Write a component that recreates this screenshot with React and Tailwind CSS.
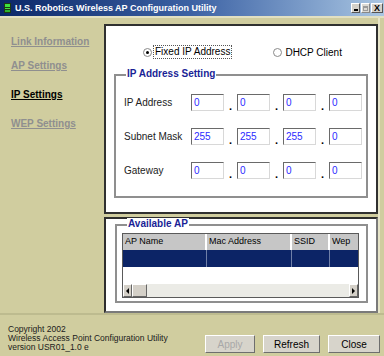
import React, { useState } from "react";

const NAV = [
  { label: "Link Information", mt: "mt-0" },
  { label: "AP Settings", mt: "mt-[12px]" },
  { label: "IP Settings", mt: "mt-[17px]", active: true },
  { label: "WEP Settings", mt: "mt-[17px]" },
];

const ROWS = [
  { label: "IP Address", values: ["0", "0", "0", "0"] },
  { label: "Subnet Mask", values: ["255", "255", "255", "0"] },
  { label: "Gateway", values: ["0", "0", "0", "0"] },
];

// sunken win32 edit box
const Octet = ({ value }) => (
  <div className="w-[33px] h-[17px] bg-white border border-t-[#6a6a6a] border-l-[#6a6a6a] border-r-[#d8d8d8] border-b-[#d8d8d8] pl-[2px] text-[10px] leading-[15px] text-[#2b2bff]">
    {value}
  </div>
);

const Radio = ({ checked }) => (
  <div className="w-[9px] h-[9px] rounded-full border border-[#8a8a8a] bg-white flex items-center justify-center">
    {checked && <div className="w-[3px] h-[3px] rounded-full bg-black" />}
  </div>
);

const Button = ({ children, width, disabled }) => (
  <button
    className={`${width} h-[18px] bg-[#d7d4cb] border border-t-white border-l-white border-r-[#6e6e6e] border-b-[#6e6e6e] text-[10px] ${
      disabled ? "text-[#a8a8a8]" : "text-black"
    }`}
  >
    {children}
  </button>
);

const App = () => {
  const [mode, setMode] = useState("fixed");

  return (
    <div className="w-[384px] h-[356px] bg-[#d0cd9f] flex flex-col overflow-hidden font-['Liberation_Sans',Arial,sans-serif]">
      {/* title bar */}
      <div className="h-[16px] flex items-center bg-gradient-to-r from-[#0b2768] via-[#3d62a4] to-[#aac6e2] pl-[4px]">
        <svg width="7" height="10" viewBox="0 0 7 10">
          <rect x="0" y="0" width="7" height="10" fill="#1d3b12" />
          <rect x="1" y="1" width="5" height="3" fill="#3ee23e" />
          <rect x="1" y="5" width="5" height="1" fill="#3ee23e" />
          <rect x="1" y="7" width="5" height="2" fill="#2fb52f" />
        </svg>
        <span className="ml-[4px] text-white font-bold text-[9px] leading-none">
          U.S. Robotics Wireless AP Configuration Utility
        </span>
        <div className="ml-auto flex items-center gap-[1px] pr-[1px]">
          <div className="w-[9px] h-[10px] bg-[#d4d0c8] border border-t-white border-l-white border-r-[#555] border-b-[#555] flex items-end justify-center pb-[1px]">
            <div className="w-[4px] h-[2px] bg-black" />
          </div>
          <div className="w-[9px] h-[10px] bg-[#dcdad4] border border-t-white border-l-white border-r-[#888] border-b-[#888] flex items-center justify-center">
            <div className="w-[5px] h-[5px] border border-[#9a9a9a] border-t-2" />
          </div>
          <div className="w-[12px] h-[10px] bg-[#d4d0c8] border border-t-white border-l-white border-r-[#555] border-b-[#555] flex items-center justify-center text-[9px] font-bold leading-none text-black">
            X
          </div>
        </div>
      </div>

      <div className="flex flex-1 border-t-2 border-[#e2e0c2]">
        {/* left nav */}
        <div className="w-[104px] pl-[11px] pt-[18px] flex flex-col items-start">
          {NAV.map((item) => (
            <span
              key={item.label}
              className={`${item.mt} text-[10px] leading-[12px] font-bold underline ${
                item.active ? "text-black" : "text-[#8f8f8f]"
              }`}
            >
              {item.label}
            </span>
          ))}
        </div>

        {/* right column */}
        <div className="w-[276px] pt-[6px] flex flex-col border-r-2 border-[#e6e4c8]">
          {/* IP panel */}
          <div className="h-[190px] bg-white border-2 border-[#303030] flex flex-col">
            <div className="mt-[19px] h-[14px] flex items-center pl-[37px] text-[10px] text-black">
              <button className="flex items-center" onClick={() => setMode("fixed")}>
                <Radio checked={mode === "fixed"} />
                <span className="ml-[1px] px-[1px] leading-[12px] border border-dotted border-[#555]">
                  Fixed IP Address
                </span>
              </button>
              <button className="flex items-center ml-[41px]" onClick={() => setMode("dhcp")}>
                <Radio checked={mode === "dhcp"} />
                <span className="ml-[3px]">DHCP Client</span>
              </button>
            </div>

            <div className="relative mt-[15px] mx-[8px] h-[124px] border-2 border-[#8f8f8f] pl-[8px] pt-[18px] flex flex-col gap-[17px]">
              <span className="absolute -top-[8px] left-[10px] bg-white px-[1px] text-[10px] leading-[12px] font-bold text-[#1a1f96]">
                IP Address Setting
              </span>
              {ROWS.map((row) => (
                <div key={row.label} className="flex items-center h-[17px]">
                  <span className="w-[67px] text-[10px] text-[#222]">{row.label}</span>
                  {row.values.map((v, i) => (
                    <React.Fragment key={i}>
                      {i > 0 && (
                        <span className="w-[13px] self-end text-center text-[11px] leading-[9px] font-bold">.</span>
                      )}
                      <Octet value={v} />
                    </React.Fragment>
                  ))}
                </div>
              ))}
            </div>
          </div>

          {/* available AP panel */}
          <div className="mt-[3px] h-[96px] bg-white border-2 border-t-[#2e2e2e] border-l-[#2e2e2e] border-r-[#7a7a7a] border-b-[#7a7a7a] pt-[5px]">
            <div className="relative ml-[9px] w-[253px] h-[79px] border-2 border-[#8f8f8f] pl-[5px] pt-[7px]">
              <span className="absolute -top-[8px] left-[10px] bg-white px-[1px] text-[10px] leading-[12px] font-bold text-[#1a1f96]">
                Available AP
              </span>
              <div className="w-[237px] h-[65px] border border-[#5a5a5a] flex flex-col">
                <div className="flex h-[16px] bg-[#c6c6c6] text-[9px] leading-[15px] text-black">
                  <div className="w-[84px] pl-[2px] border-r-2 border-white">AP Name</div>
                  <div className="w-[85px] pl-[2px] border-r-2 border-white">Mac Address</div>
                  <div className="w-[38px] pl-[2px] border-r-2 border-white">SSID</div>
                  <div className="flex-1 pl-[2px]">Wep</div>
                </div>
                <div className="flex h-[17px] bg-[#0c2466]">
                  <div className="w-[84px] border-r border-[#6f7fa8]" />
                  <div className="w-[85px] border-r border-[#6f7fa8]" />
                  <div className="w-[38px] border-r border-[#6f7fa8]" />
                  <div className="flex-1" />
                </div>
                <div className="h-[17px] bg-white" />
                <div className="flex h-[13px] bg-[#ebebe6]">
                  <div className="w-[9px] bg-[#d4d0c8] border border-t-white border-l-white border-r-[#666] border-b-[#666] flex items-center justify-center">
                    <div className="w-0 h-0 border-y-[3px] border-y-transparent border-r-[3px] border-r-black" />
                  </div>
                  <div className="w-[15px] bg-[#d4d0c8] border border-t-white border-l-white border-r-[#666] border-b-[#666]" />
                  <div className="flex-1" />
                  <div className="w-[9px] bg-[#d4d0c8] border border-t-white border-l-white border-r-[#666] border-b-[#666] flex items-center justify-center">
                    <div className="w-0 h-0 border-y-[3px] border-y-transparent border-l-[3px] border-l-black" />
                  </div>
                </div>
              </div>
            </div>
          </div>
        </div>
      </div>

      {/* footer */}
      <div className="h-[43px] border-t-2 border-[#bdbb8f] flex items-end pb-[3px] pl-[8px] pr-[4px]">
        <div className="text-[8.5px] leading-[9px] text-[#1a1a1a] pb-[1px]">
          <div>Copyright 2002</div>
          <div>Wireless Access Point Configuration Utility</div>
          <div>version USR01_1.0 e</div>
        </div>
        <div className="ml-auto flex gap-[8px]">
          <Button width="w-[50px]" disabled>Apply</Button>
          <Button width="w-[57px]">Refresh</Button>
          <Button width="w-[52px]">Close</Button>
        </div>
      </div>
    </div>
  );
};

export default App;
